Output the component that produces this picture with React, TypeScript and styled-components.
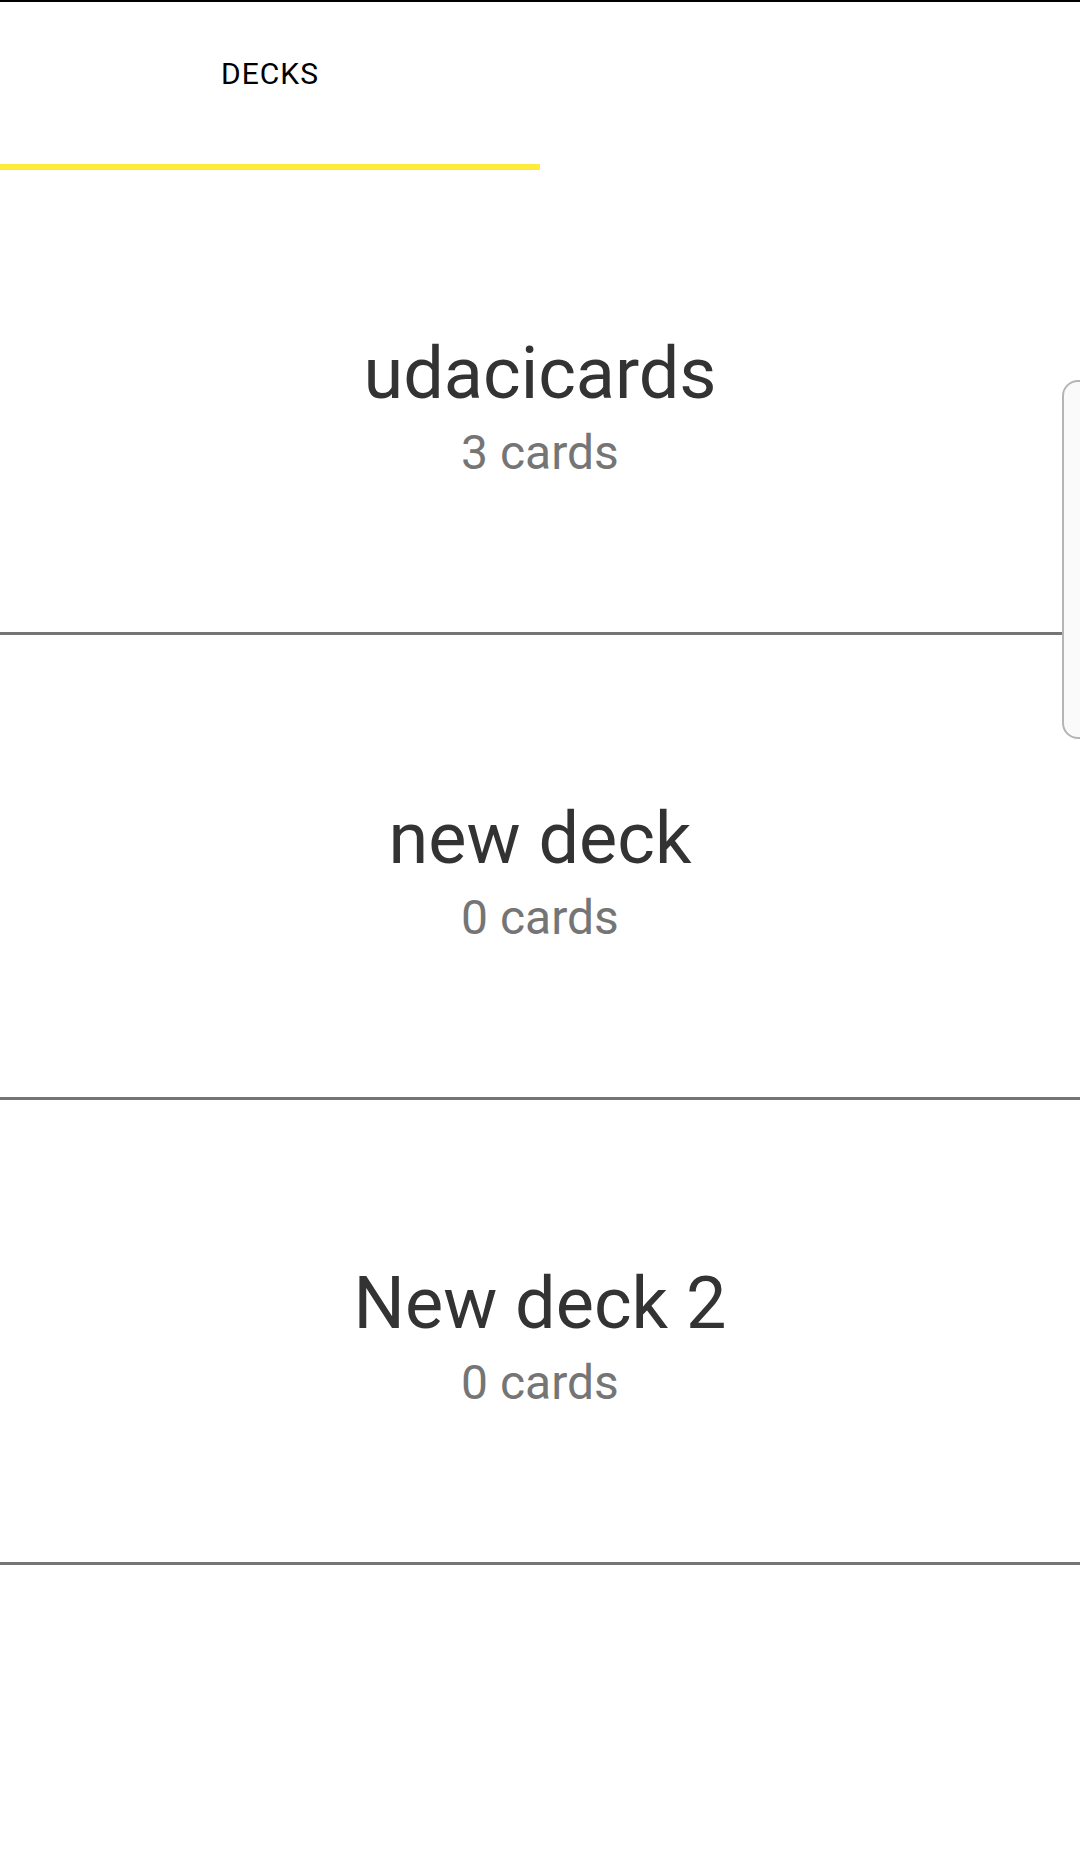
import React from 'react';
import styled, { createGlobalStyle } from 'styled-components';

type Deck = {
  title: string;
  cards: number;
};

const decks: Deck[] = [
  { title: 'udacicards', cards: 3 },
  { title: 'new deck', cards: 0 },
  { title: 'New deck 2', cards: 0 },
];

const GlobalStyle = createGlobalStyle`
  html, body {
    margin: 0;
    padding: 0;
    background: #ffffff;
  }
  body {
    font-family: Roboto, "Noto Sans", "Liberation Sans", sans-serif;
  }
`;

const Screen = styled.div`
  position: relative;
  width: 1080px;
  height: 1850px;
  background: #ffffff;
  border-top: 2px solid #000000;
  box-sizing: border-box;
  overflow: hidden;
`;

const TabBar = styled.div`
  display: flex;
  height: 168px;
  background: #ffffff;
`;

const Tab = styled.div<{ $active?: boolean }>`
  position: relative;
  width: 540px;
  display: flex;
  justify-content: center;
  padding-top: 54px;
  box-sizing: border-box;
  font-size: 30px;
  letter-spacing: 1px;
  color: #000000;
  border-bottom: 6px solid ${(p) => (p.$active ? '#ffeb3b' : 'transparent')};
`;

const DeckList = styled.div`
  display: flex;
  flex-direction: column;
`;

const DeckRow = styled.div`
  height: 465px;
  box-sizing: border-box;
  border-bottom: 3px solid #757575;
  display: flex;
  flex-direction: column;
  align-items: center;
  justify-content: center;
  padding-top: 14px;
`;

const DeckTitle = styled.div`
  font-size: 72px;
  line-height: 84px;
  color: #333333;
`;

const DeckCount = styled.div`
  margin-top: 6px;
  font-size: 48px;
  line-height: 62px;
  color: #757575;
`;

// samsung edge panel handle on the right
const EdgeHandle = styled.div`
  position: absolute;
  top: 378px;
  right: -4px;
  width: 18px;
  height: 355px;
  background: #fafafa;
  border: 2px solid #b5b5b5;
  border-radius: 16px 0 0 16px;
`;

const App = () => (
  <>
    <GlobalStyle />
    <Screen>
      <TabBar>
        <Tab $active>DECKS</Tab>
        <Tab />
      </TabBar>
      <DeckList>
        {decks.map((deck) => (
          <DeckRow key={deck.title}>
            <DeckTitle>{deck.title}</DeckTitle>
            <DeckCount>
              {deck.cards}
              {' '}
              cards
            </DeckCount>
          </DeckRow>
        ))}
      </DeckList>
      <EdgeHandle />
    </Screen>
  </>
);

export default App;
